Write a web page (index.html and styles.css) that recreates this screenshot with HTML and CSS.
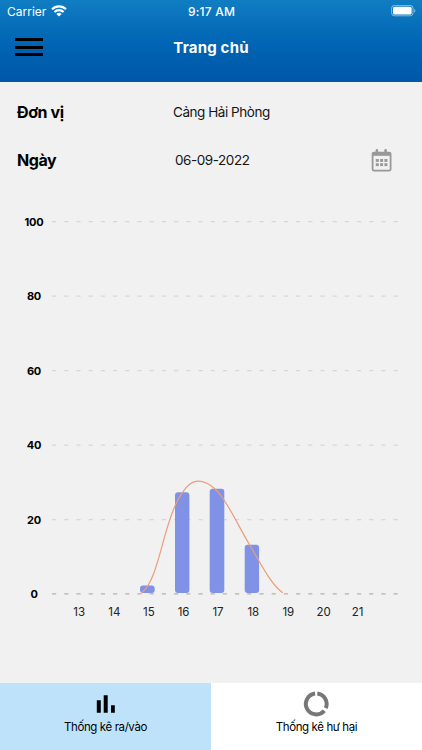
FILE: index.html
```html
<!DOCTYPE html>
<html lang="vi">
<head>
  <meta charset="UTF-8" />
  <meta name="viewport" content="width=device-width, initial-scale=1.0" />
  <title>Trang chủ</title>
  <link rel="stylesheet" href="styles.css">
</head>
<body>
  <header class="header">
    <div class="status-bar">
      <div class="carrier">
        <span>Carrier</span>
        <svg width="16" height="12" viewBox="0 0 16 12">
          <g fill="none" stroke="#fff" stroke-width="2.1">
            <path d="M1 4.2a10 10 0 0 1 14 0" />
            <path d="M3.4 7a6.5 6.5 0 0 1 9.2 0" />
          </g>
          <path d="M5.4 8.9a3.8 3.8 0 0 1 5.2 0L8 11.6z" fill="#fff" />
        </svg>
      </div>
      <span class="time">9:17 AM</span>
      <svg class="battery" width="26" height="12" viewBox="0 0 26 12">
        <rect x="1.6" y=".4" width="21.4" height="10.4" rx="2.8" fill="none" stroke="#fff" stroke-opacity=".5" />
        <rect x="3" y="1.8" width="18.6" height="7.6" rx="1.5" fill="#fff" />
        <path d="M24.3 3.9v3.6c1.4-.5 1.4-3.1 0-3.6z" fill="#fff" fill-opacity=".6" />
      </svg>
    </div>
    <div class="title-bar">
      <button class="menu" aria-label="Menu"><i></i><i></i><i></i></button>
      <h1>Trang chủ</h1>
    </div>
  </header>

  <main>
    <div class="row">
      <span class="label">Đơn vị</span>
      <span class="value unit">Cảng Hải Phòng</span>
    </div>
    <div class="row">
      <span class="label">Ngày</span>
      <span class="value date">06-09-2022</span>
      <svg class="calendar" width="22" height="24" viewBox="0 0 22 24">
        <rect x="2.6" y="4.6" width="18" height="18" rx="1.4" fill="none" stroke="#999" stroke-width="1.8" />
        <path d="M2.6 4.6h18v3.2h-18z" fill="#999" />
        <path d="M6.9 2.2v3M15.6 2.2v3" stroke="#999" stroke-width="2.6" stroke-linecap="round" />
        <g fill="#999">
          <rect x="5.8" y="11" width="3" height="2.9" /><rect x="10.1" y="11" width="3" height="2.9" /><rect x="14.4" y="11" width="3" height="2.9" />
          <rect x="5.8" y="15.2" width="3" height="2.9" /><rect x="10.1" y="15.2" width="3" height="2.9" /><rect x="14.4" y="15.2" width="3" height="2.9" />
        </g>
      </svg>
    </div>

    <svg class="chart" width="422" height="430" viewBox="0 200 422 430">
      <g class="grid">
        <path d="M52 221.7H400M52 296.1H400M52 370.6H400M52 445.1H400M52 519.6H400" />
        <path class="axis" d="M52 593.8H400" />
      </g>
      <g class="bars">
        <rect x="140" y="585.4" width="14.7" height="7.7" rx="3" />
        <rect x="175" y="492.2" width="14.4" height="100.9" rx="3" />
        <rect x="209.7" y="488.7" width="14.6" height="104.4" rx="3" />
        <rect x="244.7" y="544.7" width="14.4" height="48.4" rx="3" />
      </g>
      <path class="line" d="M141.7 592.8C158 580 162 534 175 506C182 491 190 481.2 197.7 481.2C207 481.2 216 488 224 500C234 515 240 529 250 545.5C261 564 270 583 282.7 592.8" />
      <g class="y-labels">
        <text x="34" y="226">100</text>
        <text x="34" y="300.4">80</text>
        <text x="34" y="374.9">60</text>
        <text x="34" y="449.3">40</text>
        <text x="34" y="523.8">20</text>
        <text x="34" y="598.2">0</text>
      </g>
      <g class="x-labels">
        <text x="79.2" y="615.6">13</text>
        <text x="114.3" y="615.6">14</text>
        <text x="148.8" y="615.6">15</text>
        <text x="183.6" y="615.6">16</text>
        <text x="218" y="615.6">17</text>
        <text x="253.3" y="615.6">18</text>
        <text x="288.3" y="615.6">19</text>
        <text x="323.7" y="615.6">20</text>
        <text x="357.7" y="615.6">21</text>
      </g>
    </svg>
  </main>

  <nav class="tabs">
    <a class="tab active">
      <svg width="28" height="28" viewBox="0 0 28 28">
        <path d="M4.8 10.3h4v12.4h-4zM11.7 5.2h4v17.5h-4zM19 15.2h3.8v7.5H19z" />
      </svg>
      <span>Thống kê ra/vào</span>
    </a>
    <a class="tab">
      <svg width="28" height="28" viewBox="0 0 28 28">
        <g fill="none" stroke="#777" stroke-width="4">
          <path d="M14.3 3.5A10.5 10.5 0 0 1 22.8 18.1" />
          <path d="M21.3 20.8A10.5 10.5 0 1 1 12.1 3.5" />
        </g>
      </svg>
      <span>Thống kê hư hại</span>
    </a>
  </nav>
</body>
</html>
```
FILE: styles.css
```css
* {
  box-sizing: border-box;
}

body {
  margin: 0;
  height: 750px;
  display: flex;
  flex-direction: column;
  font-family: Inter, Roboto, sans-serif;
  background: #f1f1f1;
  color: #000;
  overflow: hidden;
}

.header {
  height: 82px;
  background: linear-gradient(#107dc2, #0064b4 55%, #0057a7);
  color: #fff;
}

.status-bar {
  height: 22px;
  display: grid;
  grid-template-columns: 1fr auto 1fr;
  align-items: center;
  padding: 0 6px 0 7px;
  font-size: 12px;
}

.carrier {
  display: flex;
  align-items: center;
  gap: 5px;
}

.time {
  font-weight: 500;
  letter-spacing: 0.2px;
}

.battery {
  justify-self: end;
}

.title-bar {
  height: 50px;
  display: grid;
  grid-template-columns: 1fr auto 1fr;
  align-items: center;
  padding: 0 15px;
}

.menu {
  width: 28px;
  padding: 0;
  border: none;
  background: none;
  display: flex;
  flex-direction: column;
  gap: 4.5px;
}

.menu i {
  height: 3px;
  width: 28px;
  background: #000;
}

h1 {
  margin: 0;
  font-size: 15px;
  font-weight: 700;
  letter-spacing: 0.2px;
}

main {
  flex: 1;
  padding-top: 6px;
}

.row {
  height: 48px;
  display: grid;
  grid-template-columns: 156px 1fr 22px;
  align-items: center;
  padding: 0 30px 0 17px;
}

.label {
  font-size: 16px;
  font-weight: 700;
  letter-spacing: -0.4px;
}

.value {
  font-size: 13.5px;
  letter-spacing: -0.45px;
  color: #151515;
}

.date {
  padding-left: 2px;
}

.chart {
  display: block;
  margin-top: 16px;
}

.bars {
  fill: #8092e6;
}

.grid {
  fill: none;
  stroke: #d7d7d7;
  stroke-width: 1.2;
  stroke-dasharray: 4.2 8;
}

.axis {
  stroke: #b2b2b2;
}

.line {
  fill: none;
  stroke: #ec9c79;
  stroke-width: 1.2;
}

.y-labels,
.x-labels {
  font-size: 11px;
  text-anchor: middle;
}

.y-labels {
  font-weight: 700;
  letter-spacing: -0.2px;
}

.x-labels {
  fill: #222;
  font-size: 11.5px;
}

.tabs {
  height: 67px;
  display: flex;
}

.tab {
  flex: 1;
  display: flex;
  flex-direction: column;
  align-items: center;
  gap: 2px;
  padding-top: 7px;
  background: #fff;
  font-size: 11.5px;
  letter-spacing: -0.4px;
}

.tab.active {
  background: #bfe2fb;
}
```
